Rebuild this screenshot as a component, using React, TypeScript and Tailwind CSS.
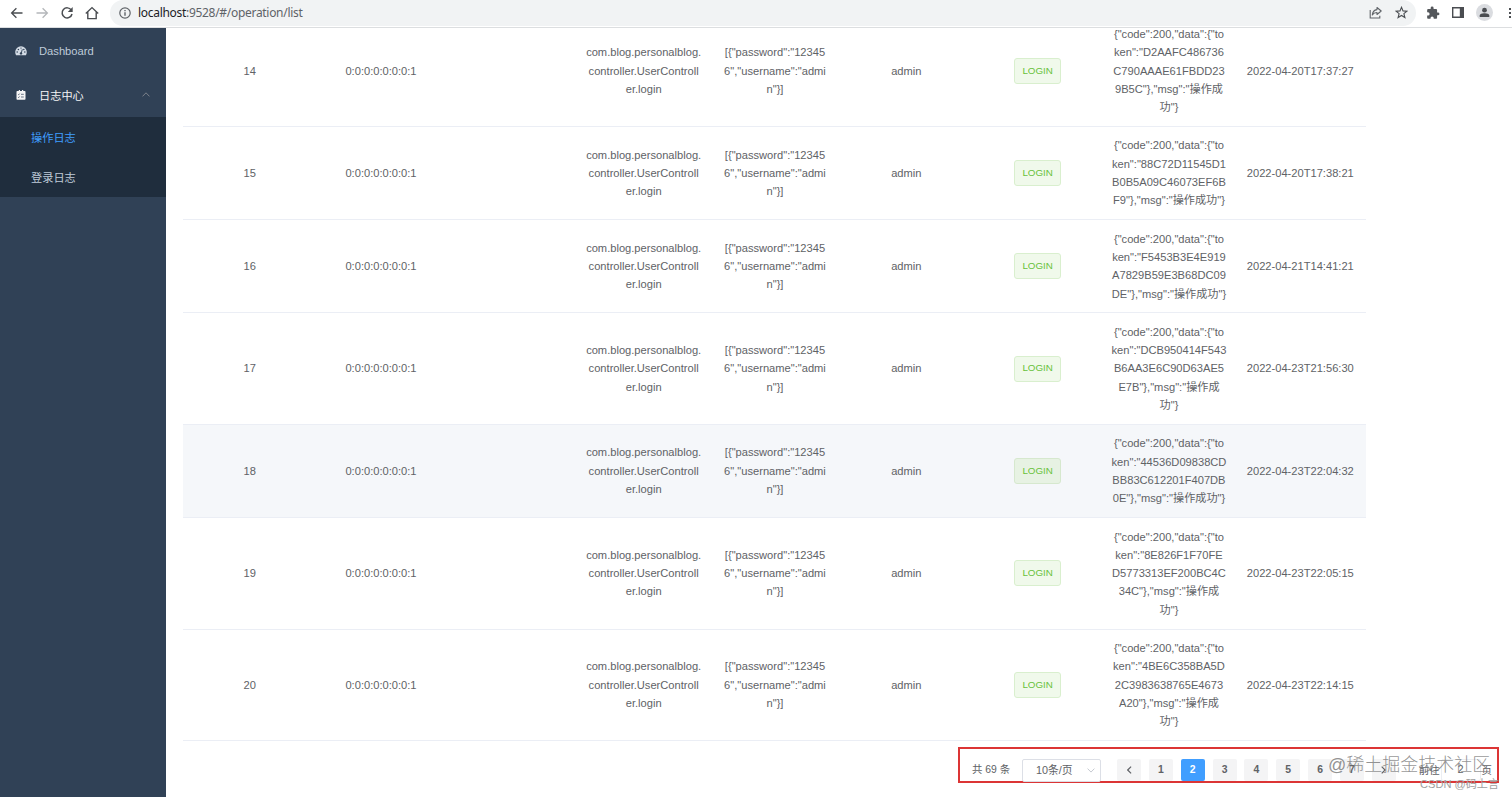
import type { ReactNode } from "react";

type LogRow = {
  id: number;
  result: string[];
  time: string;
  hovered?: boolean;
};

const METHOD: string[] = ["com.blog.personalblog.", "controller.UserControll", "er.login"];
const PARAMS: string[] = ['[{"password":"12345', '6","username":"admi', 'n"}]'];

const rows: LogRow[] = [
  {
    id: 14,
    result: ['{"code":200,"data":{"to', 'ken":"D2AAFC486736', "C790AAAE61FBDD23", '9B5C"},"msg":"操作成', '功"}'],
    time: "2022-04-20T17:37:27",
  },
  {
    id: 15,
    result: ['{"code":200,"data":{"to', 'ken":"88C72D11545D1', "B0B5A09C46073EF6B", 'F9"},"msg":"操作成功"}'],
    time: "2022-04-20T17:38:21",
  },
  {
    id: 16,
    result: ['{"code":200,"data":{"to', 'ken":"F5453B3E4E919', "A7829B59E3B68DC09", 'DE"},"msg":"操作成功"}'],
    time: "2022-04-21T14:41:21",
  },
  {
    id: 17,
    result: ['{"code":200,"data":{"to', 'ken":"DCB950414F543', "B6AA3E6C90D63AE5", 'E7B"},"msg":"操作成', '功"}'],
    time: "2022-04-23T21:56:30",
  },
  {
    id: 18,
    result: ['{"code":200,"data":{"to', 'ken":"44536D09838CD', "BB83C612201F407DB", '0E"},"msg":"操作成功"}'],
    time: "2022-04-23T22:04:32",
    hovered: true,
  },
  {
    id: 19,
    result: ['{"code":200,"data":{"to', 'ken":"8E826F1F70FE', "D5773313EF200BC4C", '34C"},"msg":"操作成', '功"}'],
    time: "2022-04-23T22:05:15",
  },
  {
    id: 20,
    result: ['{"code":200,"data":{"to', 'ken":"4BE6C358BA5D', "2C3983638765E4673", 'A20"},"msg":"操作成', '功"}'],
    time: "2022-04-23T22:14:15",
  },
];

const pages: number[] = [1, 2, 3, 4, 5, 6, 7];

const BrowserBar: React.FC = () => (
  <header className="flex h-7 shrink-0 items-center border-b border-[#dcdee0] bg-white pb-[2px] font-['Noto_Sans','Open_Sans',sans-serif] text-[#5f6368]">
    <div className="flex w-[110px] items-center gap-[11px] pl-[10px]">
      <svg className="size-[14px]" viewBox="0 0 14 14" fill="none" stroke="#4a4d51" strokeWidth="1.3">
        <path d="M12.5 7H2M6.4 2.2 1.6 7l4.8 4.8" />
      </svg>
      <svg className="size-[14px]" viewBox="0 0 14 14" fill="none" stroke="#b4b7ba" strokeWidth="1.3">
        <path d="M1.5 7H12M7.6 2.2 12.4 7l-4.8 4.8" />
      </svg>
      <svg className="size-[14px]" viewBox="0 0 14 14" fill="none" stroke="#4a4d51" strokeWidth="1.5">
        <path d="M11.3 4.1A5 5 0 1 0 12 8" />
        <path d="M12.7 1v5H7.8z" fill="#4a4d51" stroke="none" />
      </svg>
      <svg className="size-[14px]" viewBox="0 0 14 14" fill="none" stroke="#4a4d51" strokeWidth="1.4">
        <path d="M.8 7.6 7 1.6l6.2 6M2.8 6.2v6.4h8.4V6.2" />
      </svg>
    </div>
    <div className="flex h-[26px] w-[1306px] items-center rounded-full bg-[#f1f3f4] pr-2 pl-[9px]">
      <svg className="size-3" viewBox="0 0 12 12" fill="none" stroke="#5f6368" strokeWidth="1.2">
        <circle cx="6" cy="6" r="5.2" />
        <path d="M6 5.2v3.6M6 3v1.3" strokeWidth="1.4" />
      </svg>
      <span className="ml-[7px] text-[12px] leading-none tracking-[-0.025em]">
        <span className="text-[#202124]">localhost</span>:9528/#/operation/list
      </span>
      <svg className="ml-auto size-[13px]" viewBox="0 0 13 13" fill="none" stroke="#5f6368" strokeWidth="1.1">
        <path d="M1.2 4v8h9.6V9.8" />
        <path d="M8 1.5 12.2 5 8 8.5v-2C5.8 6.5 4.3 7.3 3.3 9 3.6 6 5.2 4 8 3.6z" strokeLinejoin="round" />
      </svg>
      <svg className="ml-[13px] size-[13px]" viewBox="0 0 13 13" fill="none" stroke="#4a4d51" strokeWidth="1.1">
        <path d="m6.5 1.3 1.5 3.6 3.9.3-3 2.5 1 3.8-3.4-2-3.4 2 1-3.8-3-2.5 3.9-.3z" />
      </svg>
    </div>
    <div className="flex flex-1 items-center pl-[10px]">
      <svg className="size-[14px] shrink-0" viewBox="0 0 24 24" fill="#54575b">
        <path d="M20.5 11H19V7c0-1.1-.9-2-2-2h-4V3.5a2.5 2.5 0 0 0-5 0V5H4c-1.1 0-2 .9-2 2v3.8h1.5a2.7 2.7 0 0 1 0 5.4H2V20c0 1.1.9 2 2 2h3.8v-1.5a2.7 2.7 0 0 1 5.4 0V22H17c1.1 0 2-.9 2-2v-4h1.5a2.5 2.5 0 0 0 0-5z" />
      </svg>
      <svg className="ml-3 h-[11px] w-3 shrink-0" viewBox="0 0 12 11">
        <path d="M.7.7h10.6v9.6H.7z" fill="none" stroke="#4a4d51" strokeWidth="1.4" />
        <path d="M7.8.5h3.7v10H7.8z" fill="#4a4d51" />
      </svg>
      <span className="ml-[12px] flex size-[17px] shrink-0 items-center justify-center rounded-full bg-[#dadce0]">
        <svg className="size-[11px]" viewBox="0 0 11 11" fill="#4a4d51">
          <circle cx="5.5" cy="3.2" r="2.4" />
          <path d="M.7 10V8.6C.7 7 3.5 6.3 5.5 6.3s4.8.7 4.8 2.3V10z" />
        </svg>
      </span>
      <svg className="ml-auto h-3 w-[4px] shrink-0" viewBox="0 0 4 12" fill="#4a4d51">
        <path d="M1 1h2v2H1zM1 5h2v2H1zM1 9h2v2H1z" />
      </svg>
    </div>
  </header>
);

const Sidebar: React.FC = () => (
  <aside className="w-[166px] shrink-0 bg-[#304156] text-[11.2px] text-[#bfcbd9]">
    <div className="flex h-[45px] items-center pl-[15px]">
      <svg className="h-[10px] w-[12px]" viewBox="0 0 12 10">
        <path d="M6 .3A5.8 5.8 0 0 0 .2 6.1c0 1.1.3 2.2.9 3.1h9.8c.6-.9.9-2 .9-3.1A5.8 5.8 0 0 0 6 .3z" fill="#d3dbe5" />
        <path d="M6.2 7.3 7.3 3.3" stroke="#304156" strokeWidth=".9" />
        <g fill="#304156">
          <circle cx="2.2" cy="6" r=".75" />
          <circle cx="3.4" cy="3.4" r=".75" />
          <circle cx="6" cy="2.1" r=".65" />
          <circle cx="8.8" cy="3.4" r=".75" />
          <circle cx="9.8" cy="6" r=".75" />
          <circle cx="6" cy="7.4" r="1.2" />
        </g>
      </svg>
      <span className="ml-3 pt-[2px]">Dashboard</span>
    </div>
    <div className="flex h-11 items-center pl-[15px] text-[#f4f4f5]">
      <svg className="mx-[1px] size-[10px]" viewBox="0 0 10 10">
        <path d="M1.2 1h1.6V.1h1.2V1h2V.1h1.2V1h1.6c.4 0 .7.3.7.7v7.3c0 .4-.3.7-.7.7H1.2A.7.7 0 0 1 .5 9V1.7c0-.4.3-.7.7-.7z" fill="#f4f4f5" />
        <path d="M2 4.2l.7.6 1-1.2M5 4.3h2.8M2 7l.7.6 1-1.2M5 7h2.8" fill="none" stroke="#304156" strokeWidth=".7" />
      </svg>
      <span className="ml-3 pt-[2px]">日志中心</span>
      <svg className="mt-[-2px] mr-4 ml-auto h-[5px] w-[8px]" viewBox="0 0 8 5" fill="none" stroke="#909399" strokeWidth=".8">
        <path d="M.5 4.4 4 .8l3.5 3.6" />
      </svg>
    </div>
    <div className="flex h-[80px] flex-col bg-[#1f2d3d] pl-[31px]">
      <span className="flex h-10 items-center pt-[3px] text-[#409eff]">操作日志</span>
      <span className="flex h-10 items-center pt-[3px]">登录日志</span>
    </div>
  </aside>
);

const Cell: React.FC<{ lines?: string[]; children?: ReactNode }> = ({ lines, children }) => (
  <div className="flex flex-1 basis-0 flex-col items-center justify-center whitespace-pre">
    {lines ? lines.map((line, index) => <span key={index}>{line}</span>) : children}
  </div>
);

const TableRow: React.FC<{ row: LogRow }> = ({ row }) => (
  <div
    className={`flex shrink-0 border-b border-[#ebeef5] py-[9.5px] pl-px ${row.hovered ? "bg-[#f5f7fa]" : "bg-white"}`}
  >
    <Cell lines={[String(row.id)]} />
    <Cell lines={["0:0:0:0:0:0:0:1"]} />
    <Cell />
    <Cell lines={METHOD} />
    <Cell lines={PARAMS} />
    <Cell lines={["admin"]} />
    <Cell>
      <span
        className={`flex h-[26px] w-[47px] items-center justify-center rounded-[3px] border text-[9.8px] text-[#67c23a] ${
          row.hovered ? "border-[#d6e8ce] bg-[#e7f2e3]" : "border-[#d9efce] bg-[#f0f9eb]"
        }`}
      >
        LOGIN
      </span>
    </Cell>
    <Cell lines={row.result} />
    <Cell lines={[row.time]} />
  </div>
);

const Pagination: React.FC = () => (
  <div className="relative ml-[792px] flex h-9 w-[541px] items-center border-2 border-[#dc3535] pt-[10px] pl-3 text-[10.4px] text-[#606266]">
    <span className="w-[50px] whitespace-nowrap">共 69 条</span>
    <div className="flex h-[23px] w-[79px] shrink-0 items-center rounded-[2px] border border-[#dcdfe6] pl-[13px]">
      <span className="w-[44px] text-[10.8px] whitespace-nowrap">10条/页</span>
      <svg className="ml-[7px] h-[5px] w-2" viewBox="0 0 8 5" fill="none" stroke="#c0c4cc" strokeWidth=".9">
        <path d="M.6.6 4 4.1 7.4.6" />
      </svg>
    </div>
    <div className="ml-[16px] flex shrink-0 gap-[7.85px] font-bold text-[#606266]">
      <span className="flex h-[22px] w-6 items-center justify-center rounded-[2px] bg-[#f4f4f5]">
        <svg className="h-2 w-[5px]" viewBox="0 0 5 8" fill="none" stroke="#606266" strokeWidth="1.2">
          <path d="M4.1.6.7 4l3.4 3.4" />
        </svg>
      </span>
      {pages.map(page => (
        <span
          key={page}
          className={`flex h-[22px] w-6 items-center justify-center rounded-[2px] ${
            page === 2 ? "bg-[#409eff] text-white" : "bg-[#f4f4f5]"
          }`}
        >
          {page}
        </span>
      ))}
      <span className="flex h-[22px] w-6 items-center justify-center rounded-[2px] bg-[#f4f4f5]">
        <svg className="h-2 w-[5px]" viewBox="0 0 5 8" fill="none" stroke="#606266" strokeWidth="1.2">
          <path d="M.7.6 4.1 4 .7 7.4" />
        </svg>
      </span>
    </div>
    <span className="ml-[23px] shrink-0 pt-[2px]">前往</span>
    <span className="ml-[1px] flex h-[22px] w-10 shrink-0 items-center justify-center rounded-[2px] border border-[#eceef2]">2</span>
    <span className="ml-[1px] shrink-0 pt-[2px]">页</span>

    {/* watermarks */}
    <span className="absolute top-[4px] left-[368px] text-[18px] leading-[24px] font-light whitespace-nowrap text-[#777777]/80">
      @稀土掘金技术社区
    </span>
    <span className="absolute top-[27px] left-[460px] text-[11.1px] leading-4 whitespace-nowrap text-[#a0a0a0]">
      CSDN @码上言
    </span>
  </div>
);

export default function App() {
  return (
    <div className="flex h-[797px] w-[1512px] flex-col overflow-hidden bg-white font-['Liberation_Sans','Noto_Sans_CJK_SC',sans-serif]">
      <BrowserBar />
      <div className="flex min-h-0 flex-1">
        <Sidebar />
        <main className="flex min-w-0 flex-1 flex-col">
          <section className="ml-[17px] flex h-[713px] w-[1183px] shrink-0 flex-col justify-end overflow-hidden text-[11.14px] leading-[18.3px] text-[#606266]">
            {rows.map(row => (
              <TableRow key={row.id} row={row} />
            ))}
          </section>
          <div className="pt-[6px]">
            <Pagination />
          </div>
        </main>
      </div>
    </div>
  );
}
